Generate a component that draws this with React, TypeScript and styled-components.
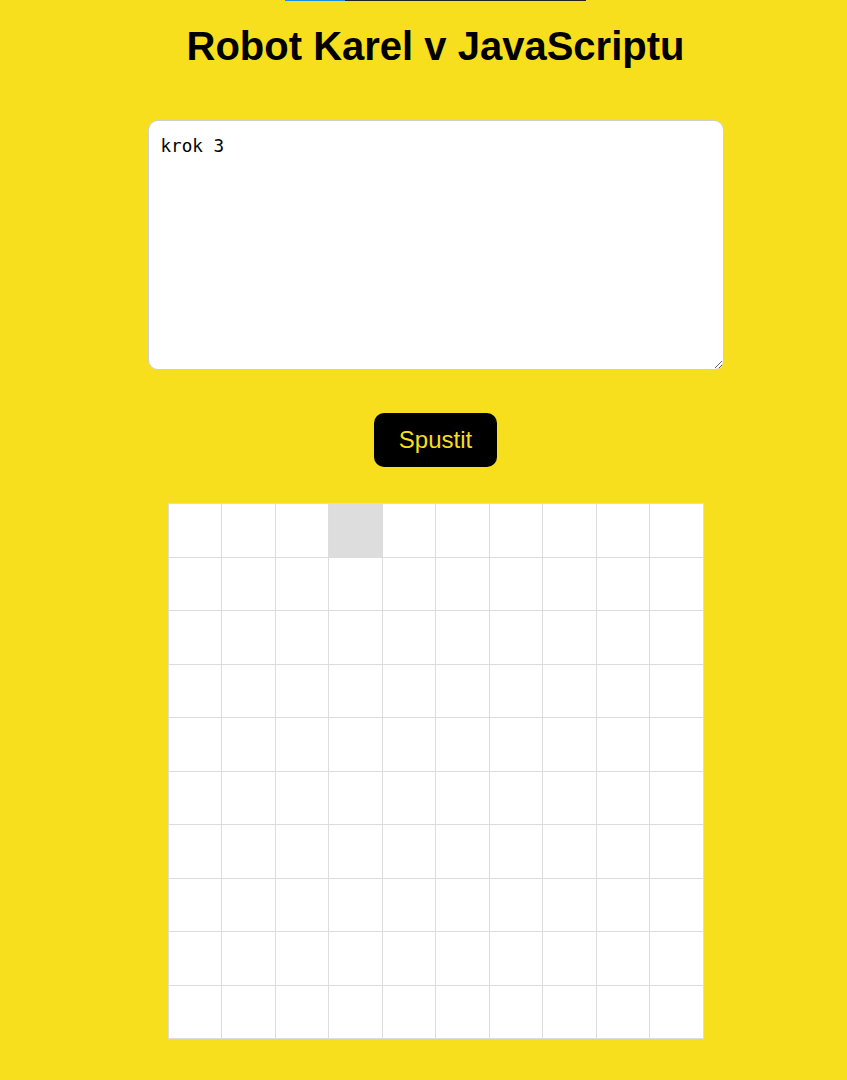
import React from "react";
import styled, { createGlobalStyle } from "styled-components";

const Global = createGlobalStyle`
  html, body {
    margin: 0;
    padding: 0;
    background: #f7df1e;
  }
  body {
    font-family: "Liberation Sans", Arial, sans-serif;
  }
`;

const Page = styled.main`
  display: flex;
  flex-direction: column;
  align-items: center;
  padding-left: 24px;
  padding-bottom: 40px;
  min-height: 100vh;
  box-sizing: border-box;
`;

const Progress = styled.div`
  width: 301px;
  height: 1px;
  background: #222;
  display: flex;
`;

const ProgressFill = styled.div`
  height: 100%;
  background: #1a8fe0;
`;

const Title = styled.h1`
  margin: 22px 0 0;
  font-size: 40px;
  line-height: 46px;
  font-weight: 700;
  color: #000;
`;

const Editor = styled.textarea`
  margin-top: 51px;
  width: 576px;
  height: 250px;
  box-sizing: border-box;
  padding: 15px 12px;
  border: 1px solid #cfcfcf;
  border-radius: 10px;
  background: #fff;
  font-family: "DejaVu Sans Mono", monospace;
  font-size: 17.6px;
  color: #000;
  outline: none;
`;

const RunButton = styled.button`
  margin-top: 43px;
  padding: 13px 25px;
  border: none;
  border-radius: 10px;
  background: #000;
  color: #f7df1e;
  font-family: "Liberation Sans", Arial, sans-serif;
  font-size: 24px;
  cursor: pointer;
`;

const Board = styled.div`
  margin-top: 36px;
  width: 536px;
  height: 536px;
  box-sizing: border-box;
  display: grid;
  grid-template-columns: repeat(10, 1fr);
  grid-template-rows: repeat(10, 1fr);
  border-left: 1px solid #dcdcdc;
  border-top: 1px solid #dcdcdc;
  background: #fff;
`;

const Cell = styled.div<{ $active?: boolean }>`
  border-right: 1px solid #dcdcdc;
  border-bottom: 1px solid #dcdcdc;
  background: ${(p) => (p.$active ? "#dddddd" : "#fff")};
`;

export default function App() {
  const cells = Array.from({ length: 100 }, (_, i) => i);
  return (
    <>
      <Global />
      <Page>
        <Progress>
          <ProgressFill style={{ width: "20%" }} />
        </Progress>
        <Title>Robot Karel v JavaScriptu</Title>
        <Editor defaultValue="krok 3" spellCheck={false} />
        <RunButton>Spustit</RunButton>
        <Board>
          {cells.map((i) => (
            <Cell key={i} $active={i === 3} />
          ))}
        </Board>
      </Page>
    </>
  );
}
